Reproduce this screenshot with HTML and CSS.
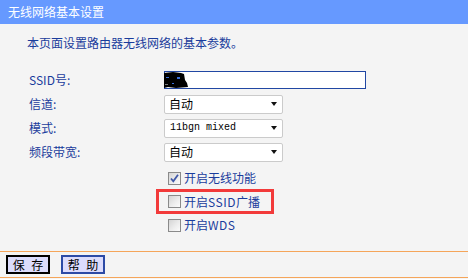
FILE: index.html
```html
<!DOCTYPE html>
<html lang="zh-CN">
<head>
<meta charset="utf-8">
<title>无线网络基本设置</title>
<link rel="stylesheet" href="styles.css">
</head>
<body>
<div class="page">
  <div class="header">无线网络基本设置</div>
  <p class="desc">本页面设置路由器无线网络的基本参数。</p>
  <div class="form">
    <div class="lbl">SSID号:</div>
    <div class="ctl">
      <div class="text-input">
        <svg class="blob" width="25" height="16" viewBox="0 0 25 16">
          <path d="M0 1 L9 0 L17 1 L20 2 L21 8 L23 11 L24 15 L12 16 L4 15 L0 16 Z" fill="#000"/>
          <rect x="2" y="5" width="3" height="1" fill="#3a6fd8"/>
          <rect x="13" y="5" width="3" height="2" fill="#3a6fd8"/>
          <rect x="8" y="11" width="2" height="1" fill="#3a6fd8"/>
          <rect x="1" y="12" width="3" height="1" fill="#777"/>
        </svg>
      </div>
    </div>
    <div class="lbl">信道:</div>
    <div class="ctl"><div class="select"><span>自动</span><i class="arrow"></i></div></div>
    <div class="lbl">模式:</div>
    <div class="ctl"><div class="select"><span class="mono">11bgn mixed</span><i class="arrow"></i></div></div>
    <div class="lbl">频段带宽:</div>
    <div class="ctl"><div class="select"><span>自动</span><i class="arrow"></i></div></div>
  </div>
  <div class="checks">
    <div class="check r1">
      <span class="box"><svg width="11" height="11" viewBox="0 0 11 11"><path d="M2 5.5 L4.3 8.3 L9 1.8" fill="none" stroke="#4058a8" stroke-width="1.8"/></svg></span>
      <span>开启无线功能</span>
    </div>
    <div class="check r2">
      <span class="box"></span>
      <span>开启<span class="lat">SSID</span>广播</span>
      <span class="mark"></span>
    </div>
    <div class="check r3">
      <span class="box"></span>
      <span>开启<span class="lat">WDS</span></span>
    </div>
  </div>
  <div class="footer">
    <button class="btn primary">保 存</button>
    <button class="btn">帮 助</button>
  </div>
</div>
</body>
</html>
```
FILE: styles.css
```css
html, body {
  margin: 0;
  padding: 0;
}
body {
  background: #f4f4f4;
  font-family: "Noto Sans CJK SC", "Noto Sans", sans-serif;
  font-size: 12px;
  color: #1a3c9c;
}
.page {
  width: 468px;
  height: 279px;
  overflow: hidden;
  display: flex;
  flex-direction: column;
}
.header {
  height: 24px;
  line-height: 24px;
  background: #6699ff;
  color: #ffffff;
  font-size: 12px;
  padding-left: 8px;
}
.desc {
  margin: 11px 0 17px 0;
  height: 16px;
  line-height: 16px;
  padding-left: 27px;
}
.form {
  display: grid;
  grid-template-columns: 164px 1fr;
  grid-auto-rows: 24px;
  align-items: center;
}
.lbl {
  padding-left: 29px;
  line-height: 16px;
}
.ctl {
  display: flex;
  align-items: center;
}
.text-input {
  box-sizing: border-box;
  width: 202px;
  height: 18px;
  border: 1px solid #2147a3;
  background: #fff;
  display: flex;
  align-items: center;
  margin-top: -1px;
}
.blob {
  display: block;
  margin-left: -1px;
}
.select {
  box-sizing: border-box;
  width: 119px;
  height: 19px;
  border: 1px solid #cbcbcb;
  border-radius: 2px;
  background: #fff;
  color: #000;
  display: flex;
  align-items: center;
  justify-content: space-between;
  padding: 0 5px 0 4px;
  line-height: 16px;
}
.mono {
  font-family: "Liberation Mono", "DejaVu Sans Mono", monospace;
  font-size: 10px;
  padding-left: 1px;
}
.arrow {
  display: block;
  width: 0;
  height: 0;
  border-left: 3.5px solid transparent;
  border-right: 3.5px solid transparent;
  border-top: 4px solid #111;
}
.checks {
  margin-top: 2px;
  display: flex;
  flex-direction: column;
}
.check {
  position: relative;
  display: flex;
  align-items: center;
  padding-left: 168px;
  gap: 3px;
  line-height: 16px;
}
.check.r1 { height: 24px; }
.check.r2 { height: 23px; }
.check.r3 { height: 24px; }
.lat {
  letter-spacing: 0.5px;
}
.box {
  box-sizing: border-box;
  width: 13px;
  height: 13px;
  border: 1px solid #8a8a8a;
  background: linear-gradient(135deg, #d4d4d4 0%, #ececec 55%, #fbfbfb 100%);
  display: flex;
  align-items: center;
  justify-content: center;
  flex: none;
}
.box svg {
  display: block;
}
.mark {
  position: absolute;
  left: 156px;
  top: -1px;
  width: 118px;
  height: 25px;
  box-sizing: border-box;
  border: 3px solid #f23a3a;
}
.footer {
  margin-top: 14px;
  border-top: 1px solid #f5a55a;
  border-bottom: 1px solid #f5a55a;
  padding: 3px 6px;
  display: flex;
  gap: 11px;
}
.btn {
  box-sizing: border-box;
  width: 44px;
  height: 19px;
  margin: 0;
  padding: 0;
  background: #dcdcfc;
  color: #000;
  font-family: "Noto Sans CJK SC", sans-serif;
  font-size: 12px;
  line-height: 15px;
  word-spacing: 4px;
  border: 2px solid #2c4aa6;
  border-radius: 0;
}
.btn.primary {
  border-color: #000;
}
```
